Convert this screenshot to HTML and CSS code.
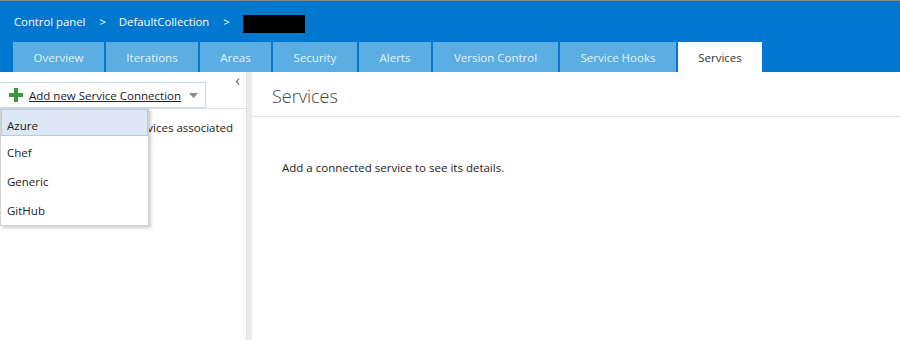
FILE: index.html
```html
<!DOCTYPE html>
<html lang="en">
<head>
    <meta charset="UTF-8">
    <title>Control panel - Services</title>
    <link rel="stylesheet" href="styles.css">
</head>
<body>
    <div class="header">
        <div class="breadcrumb">
            <span>Control panel</span>
            <span class="sep">&gt;</span>
            <span>DefaultCollection</span>
            <span class="sep">&gt;</span>
            <span class="redacted"></span>
        </div>
        <div class="tabs">
            <div class="tab tab-overview">Overview</div>
            <div class="tab tab-iterations">Iterations</div>
            <div class="tab tab-areas">Areas</div>
            <div class="tab tab-security">Security</div>
            <div class="tab tab-alerts">Alerts</div>
            <div class="tab tab-vc">Version Control</div>
            <div class="tab tab-hooks">Service Hooks</div>
            <div class="tab tab-services active">Services</div>
        </div>
    </div>
    <div class="main">
        <div class="left-panel">
            <div class="toolbar">
                <button class="add-button">
                    <svg class="plus" width="14" height="14" viewBox="0 0 14 14">
                        <rect x="5" y="0" width="4" height="14" fill="#3c9a3c"/>
                        <rect x="0" y="5" width="14" height="4" fill="#3c9a3c"/>
                    </svg>
                    <span class="add-label">Add new Service Connection</span>
                    <svg class="caret" width="9" height="5" viewBox="0 0 9 5">
                        <polygon points="0,0 9,0 4.5,5" fill="#888"/>
                    </svg>
                </button>
                <span class="collapse">&#8249;</span>
            </div>
            <div class="empty-text">There are currently no services associated with this project.</div>
            <div class="menu">
                <div class="menu-item hover">Azure</div>
                <div class="menu-item">Chef</div>
                <div class="menu-item">Generic</div>
                <div class="menu-item">GitHub</div>
            </div>
        </div>
        <div class="splitter"></div>
        <div class="right-panel">
            <div class="title">Services</div>
            <div class="details">Add a connected service to see its details.</div>
        </div>
    </div>
</body>
</html>
```

FILE: styles.css
```css
body {
    margin: 0;
    font-family: "Segoe UI", "Open Sans", sans-serif;
    font-size: 11.5px;
    color: #222;
    background-color: white;
    height: 340px;
    overflow: hidden;
}
.header {
    background-color: #0078cf;
    border-top: 1px solid #8a8a8a;
}
.breadcrumb {
    height: 41px;
    display: flex;
    align-items: center;
    padding-left: 14px;
    color: white;
    font-size: 11.3px;
}
.breadcrumb .sep {
    margin: 0 13px 0 14px;
}
.redacted {
    display: inline-block;
    width: 62px;
    height: 18px;
    margin-top: 4px;
    background-color: black;
}
.tabs {
    display: flex;
    padding-left: 13px;
    gap: 2px;
    height: 30px;
}
.tab {
    background-color: #5aaee2;
    color: #e4f1fb;
    display: flex;
    align-items: center;
    justify-content: center;
    padding-top: 1px;
    box-sizing: border-box;
}
.tab-overview { width: 91px; }
.tab-iterations { width: 92px; }
.tab-areas { width: 71px; }
.tab-security { width: 84px; }
.tab-alerts { width: 72px; }
.tab-vc { width: 125px; }
.tab-hooks { width: 116px; }
.tab-services { width: 84px; }
.tab.active {
    background-color: white;
    color: #333;
}
.main {
    display: flex;
    height: 268px;
}
.left-panel {
    width: 246px;
    position: relative;
}
.toolbar {
    height: 36px;
    border-bottom: 1px solid #e0e0e0;
    display: flex;
    align-items: flex-start;
    justify-content: space-between;
}
.add-button {
    margin-top: 10px;
    height: 26px;
    width: 206px;
    border: 1px solid #c2dcf2;
    border-left: none;
    background: white;
    padding: 0 0 0 9px;
    display: flex;
    align-items: center;
    font-family: inherit;
    font-size: 11.5px;
    color: #222;
}
.add-label {
    text-decoration: underline;
    margin-left: 6px;
}
.caret {
    margin-left: 8px;
}
.collapse {
    font-size: 16px;
    color: #666;
    margin: 0 6px 0 0;
    line-height: 16px;
}
.empty-text {
    padding: 9px 8px;
    line-height: 20px;
}
.menu {
    position: absolute;
    left: 0;
    top: 36px;
    width: 147px;
    background: white;
    border: 1px solid #d4d4d4;
    box-shadow: 2px 2px 3px rgba(0, 0, 0, 0.2);
}
.menu-item {
    height: 29px;
    box-sizing: border-box;
    padding: 3px 0 0 5px;
    line-height: 22px;
    border: 1px solid transparent;
}
.menu-item.hover {
    background-color: #dde7f5;
    border-color: #b5cbe9;
    height: 27px;
    padding-top: 5px;
    margin-bottom: 2px;
}
.splitter {
    width: 5px;
    background-color: #ececec;
    border-left: 1px solid #dedede;
}
.right-panel {
    flex: 1;
}
.title {
    height: 44px;
    line-height: 48px;
    padding-left: 20px;
    font-size: 18px;
    font-weight: 300;
    color: #444;
    border-bottom: 1px solid #e4e4e4;
}
.details {
    margin-top: 43px;
    padding-left: 30px;
}
```
